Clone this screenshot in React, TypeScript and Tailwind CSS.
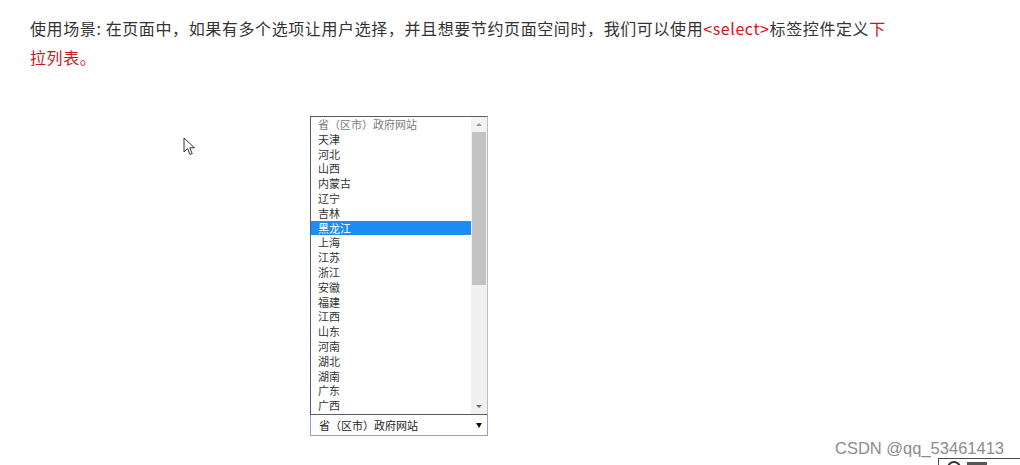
import React from "react";

const provinces = [
  "天津", "河北", "山西", "内蒙古", "辽宁", "吉林", "黑龙江", "上海", "江苏", "浙江",
  "安徽", "福建", "江西", "山东", "河南", "湖北", "湖南", "广东", "广西",
];

const cjk = { fontFamily: '"Noto Sans CJK SC", "Liberation Sans", sans-serif' };

function Cursor() {
  return (
    <svg width="14" height="20" viewBox="0 0 14 20" className="absolute left-[183px] top-[137px]">
      <path
        d="M1 1 L1 15 L4.5 11.5 L7 17.5 L9.2 16.6 L6.8 10.8 L11.5 10.8 Z"
        fill="#fff"
        stroke="#333"
        strokeWidth="1"
        strokeLinejoin="round"
      />
    </svg>
  );
}

function ProvinceList() {
  return (
    <div className="ml-[310px] mt-[44px] w-[178px]" style={cjk}>
      {/* open list */}
      <div className="flex h-[299px] border border-[#5a5a6a] border-r-[#b9bcd6] bg-white">
        <div className="flex-1">
          <div className="h-[14.8px] pl-[7px] text-[11px] leading-[14.8px] text-[#7a7a7a]">
            省（区市）政府网站
          </div>
          {provinces.map((p) => (
            <div
              key={p}
              className={
                p === "黑龙江"
                  ? "h-[14.8px] bg-[#1e8cf5] pl-[7px] text-[11px] leading-[14.8px] text-white"
                  : "h-[14.8px] pl-[7px] text-[11px] leading-[14.8px] text-[#333]"
              }
            >
              {p}
            </div>
          ))}
        </div>
        {/* scrollbar */}
        <div className="flex w-[16px] flex-col bg-[#f0f0f0]">
          <div className="flex h-[15px] items-center justify-center bg-[#f3f3f3]">
            <span className="h-0 w-0 border-x-[3px] border-b-[3px] border-x-transparent border-b-[#9a9a9a]" />
          </div>
          <div className="mx-[1px] h-[153px] bg-[#c3c3c3]" />
          <div className="flex-1" />
          <div className="flex h-[15px] items-center justify-center">
            <span className="h-0 w-0 border-x-[3px] border-t-[3px] border-x-transparent border-t-[#6a6a6a]" />
          </div>
        </div>
      </div>
      {/* closed select */}
      <div className="flex h-[21px] items-center justify-between border border-t-0 border-[#8e9fd9] bg-white pl-[8px] pr-[5px]">
        <span className="text-[11px] text-[#222]">省（区市）政府网站</span>
        <span className="h-0 w-0 border-x-[3.5px] border-t-[5px] border-x-transparent border-t-[#111]" />
      </div>
    </div>
  );
}

export default function App() {
  return (
    <div className="relative h-[465px] w-[1020px] overflow-hidden bg-white">
      <p
        className="w-[930px] pl-[30px] pt-[14px] text-[16px] leading-[29px] tracking-[0.6px] text-[#333]"
        style={cjk}
      >
        使用场景: 在页面中，如果有多个选项让用户选择，并且想要节约页面空间时，我们可以使用<span className="text-[#d0161b]">&lt;select&gt;</span>标签控件定义<span className="text-[#d0161b]">下<br />拉列表。</span>
      </p>

      <ProvinceList />

      <Cursor />

      <div
        className="absolute left-[835px] top-[436px] text-[16.5px] text-[#8c8c8c]"
        style={{ fontFamily: '"Liberation Sans", Arial, sans-serif' }}
      >
        CSDN @qq_53461413
      </div>

      {/* toolbar peeking in the corner */}
      <div className="absolute left-[938px] top-[458px] h-[20px] w-[100px] border border-[#4a4a4a] bg-white">
        <div className="absolute left-[8px] top-[2px] h-[14px] w-[14px] rounded-full border-2 border-[#333]" />
        <div className="absolute left-[28px] top-[3px] h-[3px] w-[20px] bg-[#555]" />
      </div>
    </div>
  );
}
